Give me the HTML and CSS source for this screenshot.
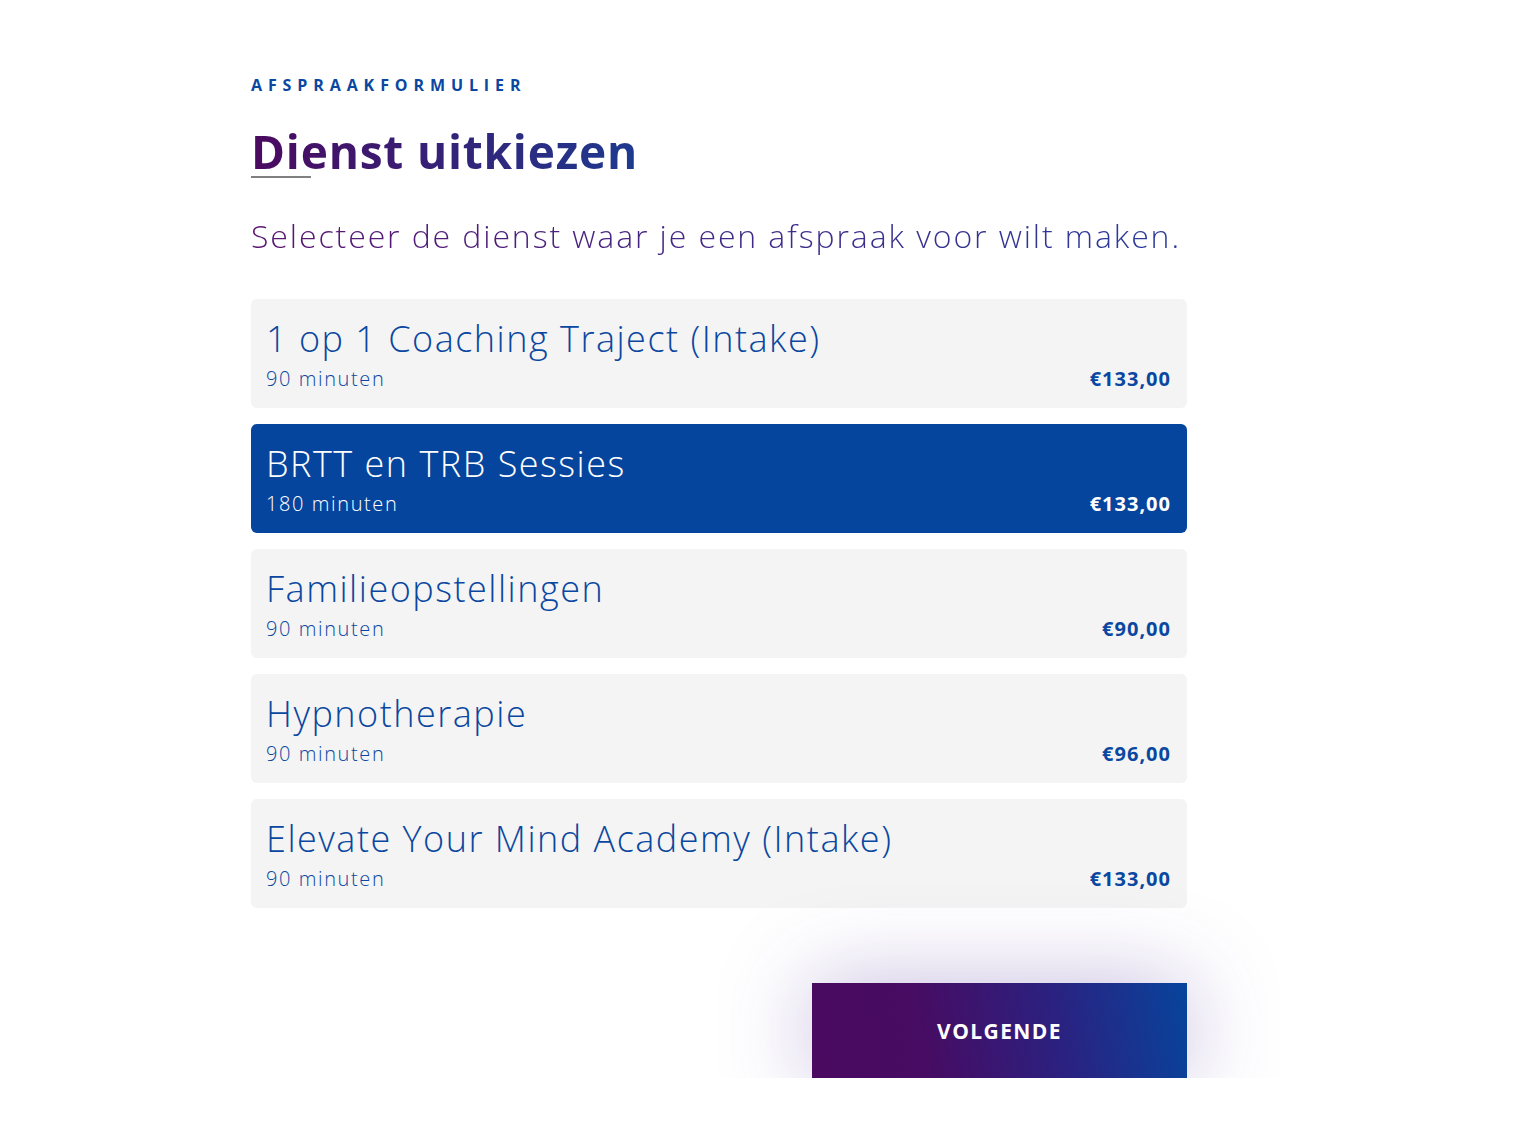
FILE: index.html
```html
<!DOCTYPE html>
<html lang="nl">
<head>
    <meta charset="UTF-8">
    <meta name="viewport" content="width=device-width, initial-scale=1.0">
    <title>Afspraakformulier</title>
    <link rel="stylesheet" href="styles.css">
</head>
<body>

<div class="page">
    <div class="container">
        <p class="eyebrow">Afspraakformulier</p>
        <h1 class="title">Dienst uitkiezen</h1>
        <p class="intro">Selecteer de dienst waar je een afspraak voor wilt maken.</p>

        <div class="services">
            <div class="service">
                <div class="service-name">1 op 1 Coaching Traject (Intake)</div>
                <div class="service-meta">
                    <span class="duration">90 minuten</span>
                    <span class="price">€133,00</span>
                </div>
            </div>
            <div class="service selected">
                <div class="service-name">BRTT en TRB Sessies</div>
                <div class="service-meta">
                    <span class="duration">180 minuten</span>
                    <span class="price">€133,00</span>
                </div>
            </div>
            <div class="service">
                <div class="service-name">Familieopstellingen</div>
                <div class="service-meta">
                    <span class="duration">90 minuten</span>
                    <span class="price">€90,00</span>
                </div>
            </div>
            <div class="service">
                <div class="service-name">Hypnotherapie</div>
                <div class="service-meta">
                    <span class="duration">90 minuten</span>
                    <span class="price">€96,00</span>
                </div>
            </div>
            <div class="service">
                <div class="service-name">Elevate Your Mind Academy (Intake)</div>
                <div class="service-meta">
                    <span class="duration">90 minuten</span>
                    <span class="price">€133,00</span>
                </div>
            </div>
        </div>

        <div class="actions">
            <button type="button" class="next">Volgende</button>
        </div>
    </div>
</div>

</body>
</html>
```

FILE: styles.css
```css
body {
    margin: 0;
    padding: 0;
    background-color: #fff;
    font-family: "Open Sans", "Noto Sans", sans-serif;
}

.page {
    height: 1078px;
    overflow: hidden;
}

.container {
    width: 936px;
    margin-left: 251px;
    padding-top: 74px;
}

.eyebrow {
    margin: 0;
    color: #0a47a0;
    font-size: 16px;
    font-weight: 700;
    letter-spacing: 5.9px;
    text-transform: uppercase;
    line-height: 22px;
}

.title {
    display: inline-block;
    position: relative;
    margin: 27px 0 0;
    font-size: 46px;
    font-weight: 700;
    line-height: 56px;
    letter-spacing: 0.8px;
    background: linear-gradient(90deg, #4b0a60 0%, #1d3a8f 100%);
    -webkit-background-clip: text;
    background-clip: text;
    color: transparent;
}

.title::after {
    content: "";
    position: absolute;
    left: 0;
    bottom: 1px;
    width: 60px;
    height: 2px;
    background-color: #808080;
}

.intro {
    margin: 35px 0 0;
    font-size: 32px;
    font-weight: 300;
    line-height: 44px;
    letter-spacing: 1.9px;
    display: inline-block;
    background: linear-gradient(90deg, #5a1570 0%, #2a3c9c 100%);
    -webkit-background-clip: text;
    background-clip: text;
    color: transparent;
}

.services {
    margin-top: 41px;
    display: flex;
    flex-direction: column;
    gap: 16px;
}

.service {
    height: 109px;
    box-sizing: border-box;
    padding: 16px 16px 0 15px;
    background-color: #f4f4f4;
    border-radius: 6px;
    color: #0a47a0;
}

.service.selected {
    background-color: #06459d;
    color: #fff;
}

.service-name {
    font-size: 36px;
    font-weight: 300;
    line-height: 48px;
    letter-spacing: 1.5px;
}

.service-meta {
    display: flex;
    justify-content: space-between;
    align-items: baseline;
    margin-top: 2px;
}

.duration {
    font-size: 20px;
    font-weight: 300;
    letter-spacing: 1.6px;
}

.price {
    font-size: 20px;
    font-weight: 700;
    letter-spacing: 1px;
}

.actions {
    display: flex;
    justify-content: flex-end;
    margin-top: 75px;
}

.next {
    width: 375px;
    height: 96px;
    padding-bottom: 2px;
    border: none;
    background: linear-gradient(80deg, #4a0a60 0%, #470c63 30%, #2b2180 65%, #07449c 100%);
    color: #fff;
    font-family: "Open Sans", sans-serif;
    font-size: 21px;
    font-weight: 700;
    letter-spacing: 1.4px;
    text-transform: uppercase;
    box-shadow: 0 0 90px rgba(90, 60, 160, 0.35);
    cursor: pointer;
}
```
